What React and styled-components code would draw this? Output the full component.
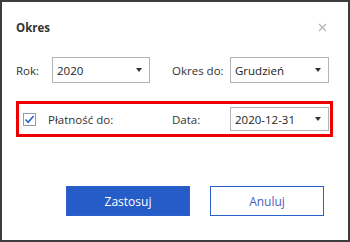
import React, { useState } from "react";
import styled, { createGlobalStyle } from "styled-components";

const GlobalStyle = createGlobalStyle`
  html, body {
    margin: 0;
    padding: 0;
    background: #ffffff;
  }
  body {
    font-family: "Open Sans", "Noto Sans", "Liberation Sans", sans-serif;
  }
`;

const Dialog = styled.div`
  width: 350px;
  height: 242px;
  box-sizing: border-box;
  border: 2px solid #3d3d3d;
  padding: 0 14px;
  background: #fff;
  color: #333;
  font-size: 11.5px;
`;

const Header = styled.div`
  height: 50px;
  display: flex;
  align-items: center;
  justify-content: space-between;
`;

const Title = styled.h1`
  margin: 0;
  font-size: 11.5px;
  font-weight: 700;
  color: #333;
`;

const CloseButton = styled.button`
  border: none;
  background: none;
  padding: 0;
  margin-right: 7px;
  width: 9px;
  height: 9px;
  display: flex;
  cursor: pointer;
`;

const Row = styled.div`
  display: flex;
  align-items: center;
  margin-top: ${(p) => p.$mt || 0}px;
`;

const Label = styled.span`
  width: ${(p) => p.$w}px;
  flex: none;
  white-space: nowrap;
  color: #333;
`;

const Spacer = styled.div`
  width: ${(p) => p.$w}px;
  flex: none;
`;

const SelectBox = styled.div`
  width: ${(p) => p.$w}px;
  height: ${(p) => p.$h || 26}px;
  box-sizing: border-box;
  border: 1px solid #b4b4b4;
  padding: 0 7px 0 4px;
  display: flex;
  align-items: center;
  justify-content: space-between;
  color: #222;
  flex: none;
`;

const Caret = styled.span`
  width: 0;
  height: 0;
  border-left: 3.5px solid transparent;
  border-right: 3.5px solid transparent;
  border-top: 4px solid #333;
`;

const Highlight = styled.div`
  margin-top: 18px;
  width: 317px;
  height: 36px;
  box-sizing: border-box;
  border: 3px solid #ee0000;
  padding: 0 1px 0 4px;
  display: flex;
  align-items: center;
`;

const CheckBox = styled.button`
  width: 13px;
  height: 13px;
  box-sizing: border-box;
  border: 1px solid #8e9bb0;
  background: #fff;
  padding: 0;
  margin-right: 12px;
  display: flex;
  align-items: center;
  justify-content: center;
  cursor: pointer;
  flex: none;
`;

const Footer = styled.div`
  margin-top: 49px;
  display: flex;
  justify-content: flex-end;
  gap: 20px;
  padding-right: 10px;
`;

const Button = styled.button`
  width: ${(p) => p.$w}px;
  height: 30px;
  box-sizing: border-box;
  font-family: inherit;
  font-size: 12px;
  cursor: pointer;
  border: 1px solid #2b5fc9;
  background: ${(p) => (p.$primary ? "#255cc8" : "#fff")};
  color: ${(p) => (p.$primary ? "#fff" : "#4a5ec0")};
`;

function Select({ value, width, height }) {
  return (
    <SelectBox $w={width} $h={height}>
      <span>{value}</span>
      <Caret />
    </SelectBox>
  );
}

export default function App() {
  const [checked, setChecked] = useState(true);

  return (
    <Dialog>
      <GlobalStyle />
      <Header>
        <Title>Okres</Title>
        <CloseButton aria-label="Zamknij">
          <svg width="9" height="9" viewBox="0 0 9 9">
            <path d="M1 1L8 8M8 1L1 8" stroke="#b0b0b0" strokeWidth="1.1" />
          </svg>
        </CloseButton>
      </Header>

      <Row $mt={5}>
        <Label $w={36}>Rok:</Label>
        <Select value="2020" width={98} />
        <Spacer $w={22} />
        <Label $w={58}>Okres do:</Label>
        <Select value="Grudzień" width={99} />
      </Row>

      <Highlight>
        <CheckBox onClick={() => setChecked(!checked)}>
          {checked && (
            <svg width="11" height="11" viewBox="0 0 11 11">
              <path d="M1.5 5.5L4.2 8.3L9.6 2" fill="none" stroke="#2a62cc" strokeWidth="1.6" />
            </svg>
          )}
        </CheckBox>
        <Label $w={124}>Płatność do:</Label>
        <Label $w={58}>Data:</Label>
        <Select value="2020-12-31" width={99} height={24} />
      </Highlight>

      <Footer>
        <Button $primary $w={124}>Zastosuj</Button>
        <Button $w={114}>Anuluj</Button>
      </Footer>
    </Dialog>
  );
}
